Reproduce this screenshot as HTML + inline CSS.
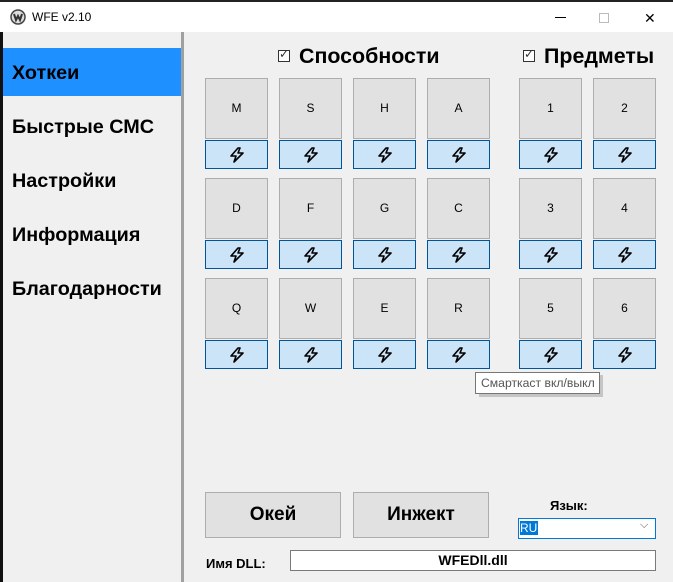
<!DOCTYPE html>
<html><head><meta charset="utf-8"><style>
*{margin:0;padding:0;box-sizing:border-box}
body{width:673px;height:582px;overflow:hidden;background:#f0f0f0;font-family:"Liberation Sans",sans-serif;position:relative}
.a{position:absolute}
.title{left:0;top:0;width:673px;height:32px;background:#fff;border-top:2px solid #222}
.side{left:0;top:32px;width:181px;height:550px;background:#f0f0f0;border-left:3px solid #111}
.sep{left:181px;top:32px;width:3px;height:550px;background:#a0a0a0}
.nav{left:12px;font-size:19.8px;font-weight:bold;color:#000}
.tile{width:63px;height:61px;background:#e1e1e1;border:1px solid #adadad;font-size:12px;text-align:center;line-height:59px}
.btn{width:63px;height:29px;background:#cce4f7;border:1px solid #005499;display:flex;align-items:center;justify-content:center}
.big{height:46px;background:#e1e1e1;border:1px solid #adadad;font-size:19px;font-weight:bold;text-align:center;line-height:44px}
.cb{width:12px;height:12px;border:1px solid #333;background:#fff}
</style></head><body>
<div class="a title">
<svg class="a" style="left:10px;top:7px" width="16" height="16" viewBox="0 0 16 16"><circle cx="8" cy="8" r="7" fill="#ddd" stroke="#444" stroke-width="1.5"/><path d="M4 5 L6 11 L8 7 L10 11 L12 5" fill="none" stroke="#333" stroke-width="2"/></svg>
<div class="a" style="left:32px;top:8px;font-size:12px">WFE v2.10</div>
<div class="a" style="left:555px;top:15px;width:11px;height:1px;background:#000"></div>
<div class="a" style="left:599px;top:11px;width:10px;height:10px;border:1px solid #bbb"></div>
<div class="a" style="left:644px;top:8px;font-size:14px;color:#000">✕</div>
</div>
<div class="a side"></div>
<div class="a" style="left:3px;top:48px;width:178px;height:48px;background:#1e90ff"></div>
<div class="a sep"></div>
<div class="a nav" style="top:62px">Хоткеи</div>
<div class="a nav" style="top:116px">Быстрые СМС</div>
<div class="a nav" style="top:170px">Настройки</div>
<div class="a nav" style="top:224px">Информация</div>
<div class="a nav" style="top:278px">Благодарности</div>

<div class="a cb" style="left:278px;top:50px"></div><div class="a" style="left:279px;top:47px;font-size:12px;color:#333">✓</div>
<div class="a" style="left:299px;top:44px;font-size:21.4px;font-weight:bold">Способности</div>
<div class="a cb" style="left:523px;top:50px"></div><div class="a" style="left:524px;top:47px;font-size:12px;color:#333">✓</div>
<div class="a" style="left:544px;top:44px;font-size:21.4px;font-weight:bold">Предметы</div>

<div id="g"></div>
<script>
var xs=[205,279,353,427,519,593],ys=[78,178,278];
var L=[["M","S","H","A","1","2"],["D","F","G","C","3","4"],["Q","W","E","R","5","6"]];
var ic='<svg width="18" height="18" viewBox="0 0 18 18"><path d="M10 2 L3 10 H8 L6 16 L15 7 H10 L12 2 Z" fill="#cce4f7" stroke="#000" stroke-width="1.6" stroke-linejoin="round"/></svg>';
var h='';
for(var r=0;r<3;r++)for(var c=0;c<6;c++){
h+='<div class="a tile" style="left:'+xs[c]+'px;top:'+ys[r]+'px">'+L[r][c]+'</div>';
h+='<div class="a btn" style="left:'+xs[c]+'px;top:'+(ys[r]+62)+'px">'+ic+'</div>';}
document.getElementById('g').innerHTML=h;
</script>

<div class="a" style="left:479px;top:375px;width:124px;height:22px;background:#999;opacity:.5"></div>
<div class="a" style="left:475px;top:372px;width:125px;height:22px;background:#fff;border:1px solid #767676;font-size:12.2px;color:#555;line-height:20px;padding-left:5px;white-space:nowrap;overflow:hidden">Смарткаст вкл/выкл</div>

<div class="a big" style="left:205px;top:492px;width:136px">Окей</div>
<div class="a big" style="left:353px;top:492px;width:136px">Инжект</div>
<div class="a" style="left:550px;top:498px;font-size:13px;font-weight:bold">Язык:</div>
<div class="a" style="left:518px;top:518px;width:138px;height:21px;background:#fff;border:1px solid #0078d7"></div>
<div class="a" style="left:520px;top:521px;width:18px;height:14px;background:#0078d7;color:#fff;font-size:12px;line-height:14px">RU</div>
<div class="a" style="left:640px;top:519px;font-size:11px;color:#555">⌵</div>
<div class="a" style="left:206px;top:556px;font-size:13px;font-weight:bold">Имя DLL:</div>
<div class="a" style="left:290px;top:550px;width:366px;height:21px;background:#fff;border:1px solid #7a7a7a;text-align:center;font-size:14px;font-weight:bold;line-height:19px">WFEDll.dll</div>
</body></html>
